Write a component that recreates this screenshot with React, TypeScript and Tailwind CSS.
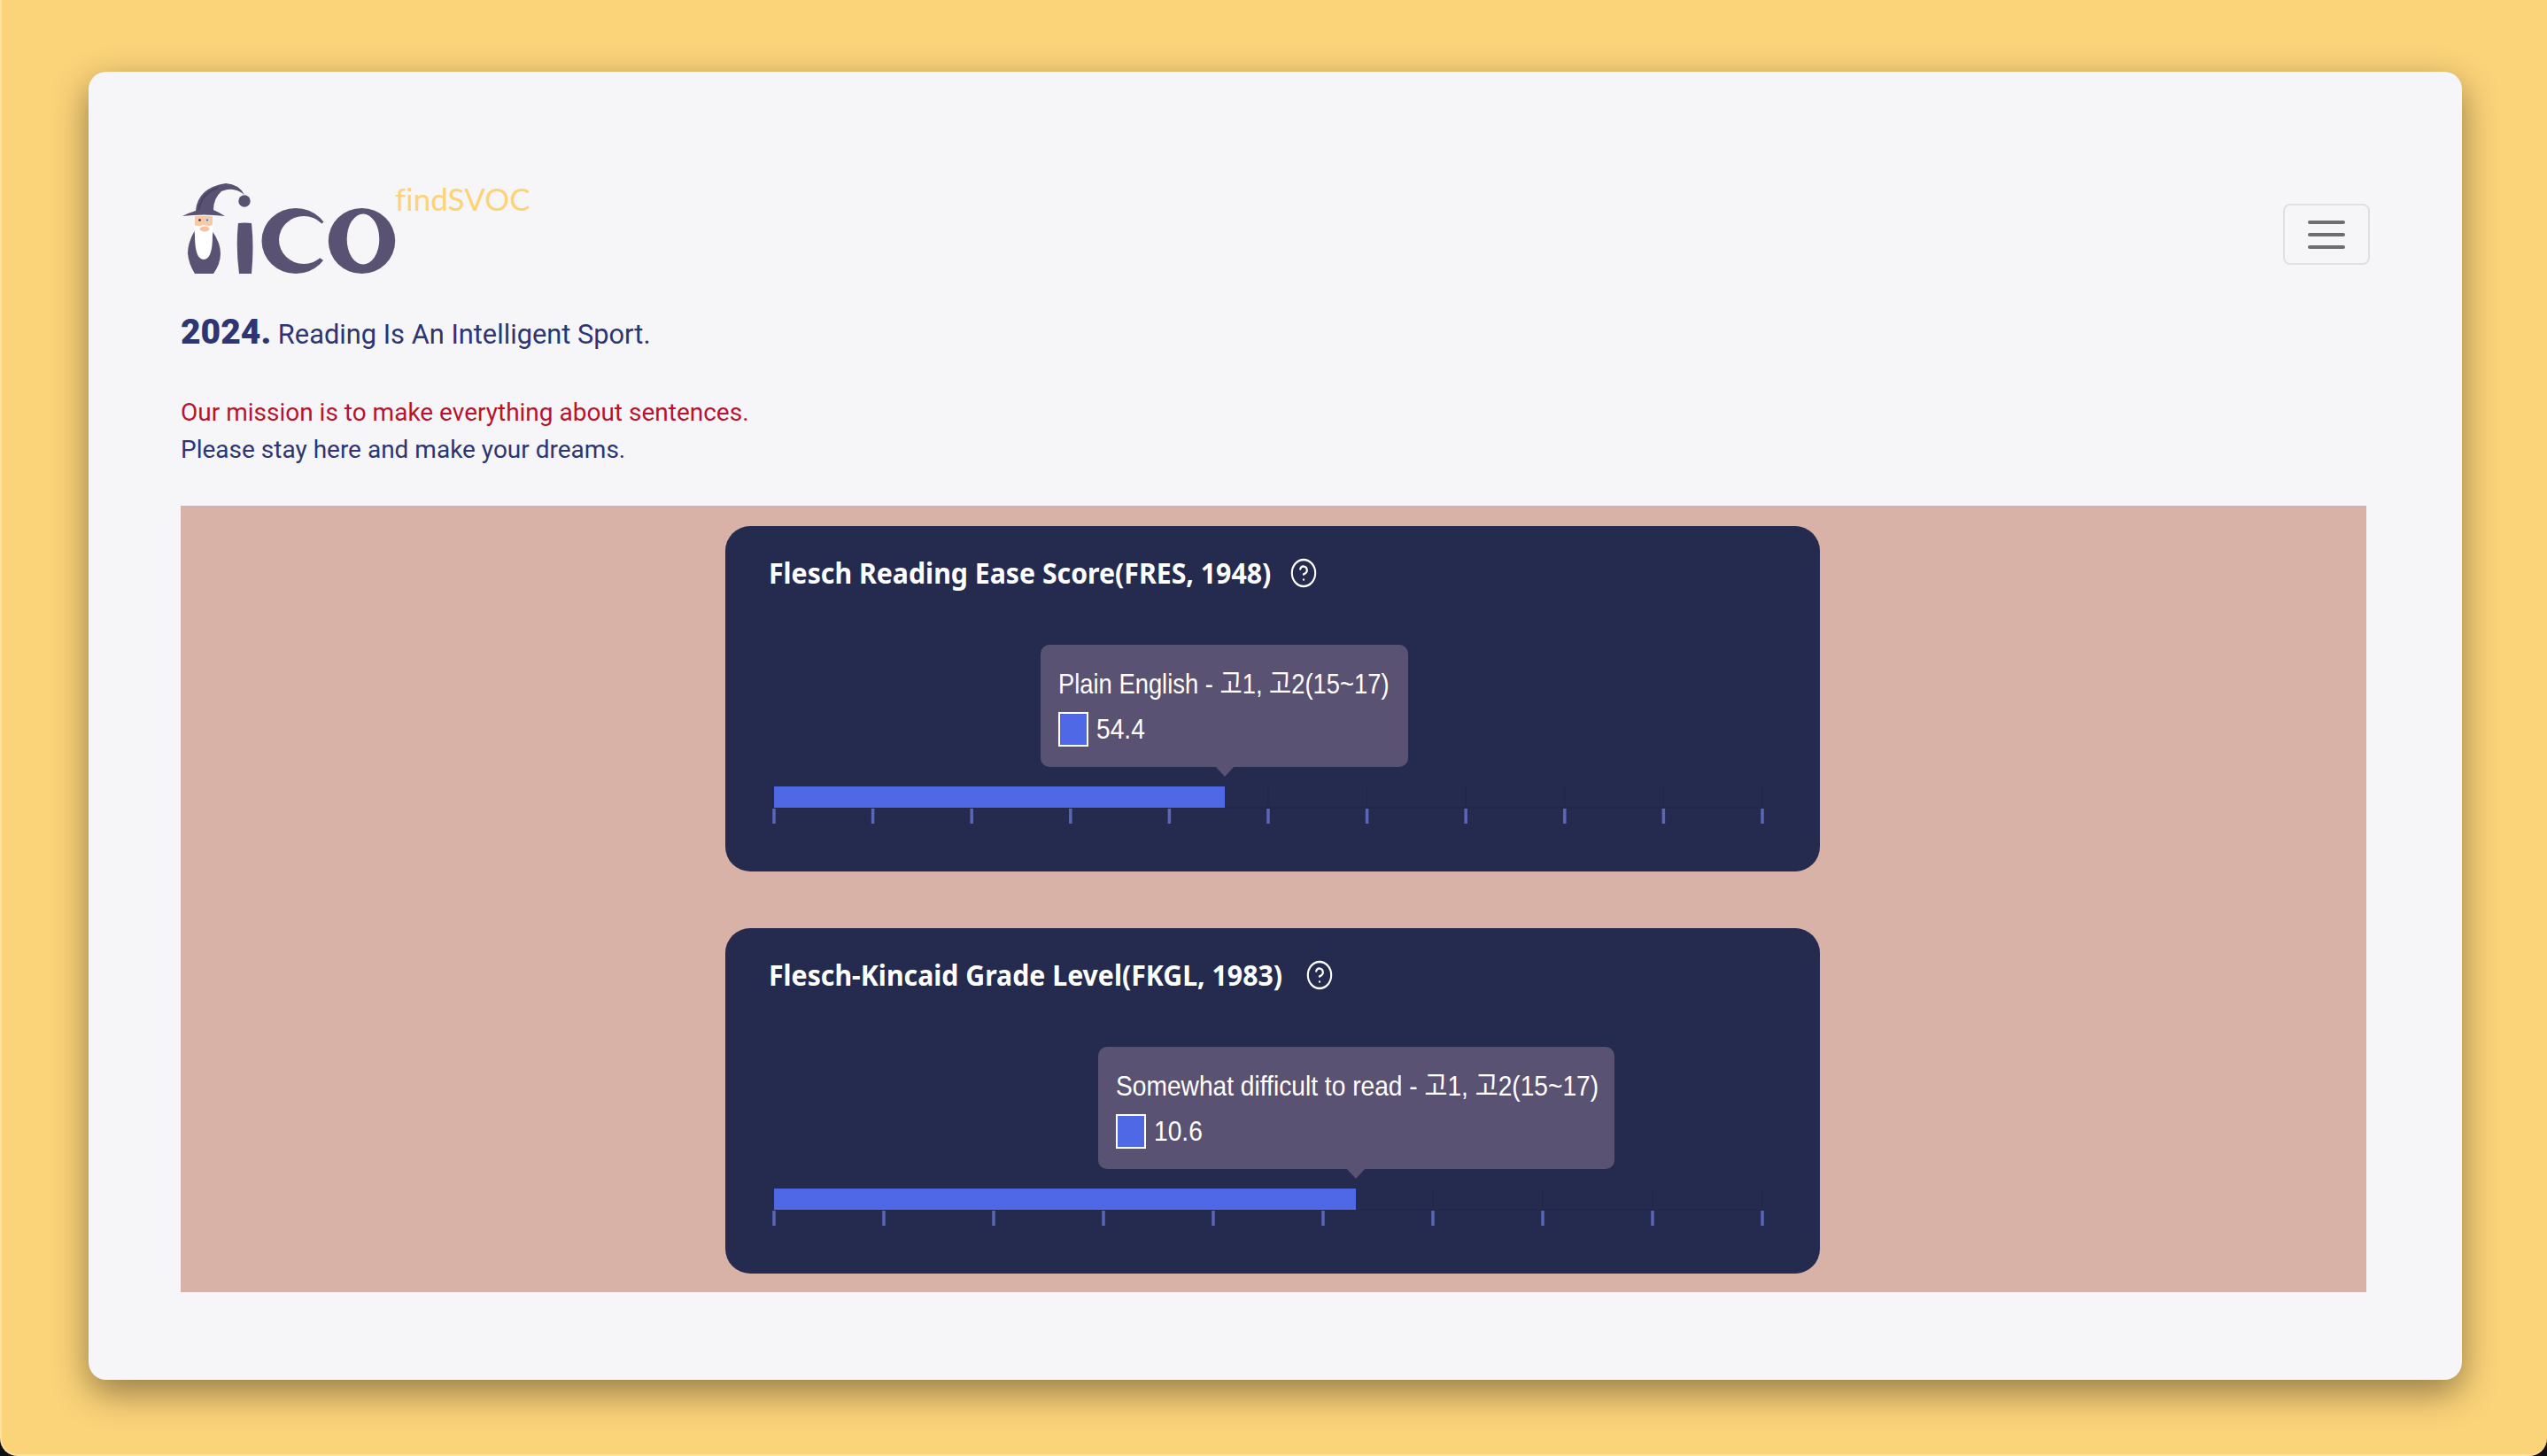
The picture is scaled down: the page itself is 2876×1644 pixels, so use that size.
import { HelpCircle } from "lucide-react";

interface ReadabilityCardProps {
  title: string;
  titleWidth: number;
  label: string;
  labelClass: string;
  value: string;
  ticks: number;
  barEnd: number;
  tooltipLeft: number;
  tooltipWidth: number;
}

const PLOT_LEFT = 55;
const PLOT_RIGHT = 1171;

function Logo() {
  return (
    <svg width="243" height="106" viewBox="0 0 243 106" className="block">
      {/* wizard hat */}
      <path d="M2 40 Q10 36 17 34 Q19 8 51 3 Q66 4 72 16 Q60 6 46 12 Q37 20 37 33 Q44 36 50 40 Q26 37 2 40 Z" fill="#5a5272" />
      <path d="M20 33 Q24 14 42 8" stroke="#4a4266" strokeWidth="2" fill="none" />
      <circle cx="72" cy="23" r="6.7" fill="#5a5272" />
      {/* body */}
      <path d="M16 56 Q8 70 8 82 Q9 94 16 105 L37 105 Q45 94 45 82 Q45 70 35 56 Z" fill="#5a5272" />
      {/* face and beard */}
      <rect x="16" y="40" width="20" height="20" fill="#f8c9a8" />
      <path d="M15 50 Q21 52 26 50 Q31 52 37 50 L36 62 Q36 89 26 89 Q16 89 16 62 Z" fill="#fff" />
      <ellipse cx="27" cy="54.5" rx="5.5" ry="3" fill="#f8c0a0" />
      <circle cx="21.5" cy="44.5" r="1.3" fill="#222" />
      <circle cx="30" cy="44.5" r="2.8" fill="#d8d4c8" />
      <circle cx="30" cy="44.5" r="1" fill="#555" />
      {/* i */}
      <path d="M65 48 Q72.5 47 80 48 Q83 75 80 105 L66 105 Q62 75 65 48 Z" fill="#5a5272" />
      {/* c */}
      <ellipse cx="130" cy="68" rx="38.5" ry="37" fill="#5a5272" />
      <ellipse cx="139" cy="67" rx="28" ry="27" fill="#f6f6f9" />
      <polygon points="151,57 164,44 172,44 172,92 164,92 151,83" fill="#f6f6f9" />
      {/* o */}
      <ellipse cx="204.5" cy="68" rx="37.7" ry="37" fill="#5a5272" />
      <ellipse cx="206" cy="66" rx="18.3" ry="28.5" fill="#f6f6f9" />
    </svg>
  );
}

function ReadabilityCard({ title, titleWidth, label, labelClass, value, ticks, barEnd, tooltipLeft, tooltipWidth }: ReadabilityCardProps) {
  const step = (PLOT_RIGHT - PLOT_LEFT) / (ticks - 1);
  const tickXs = Array.from({ length: ticks }, (_, i) => PLOT_LEFT + i * step);

  return (
    <div className="relative h-[390px] w-[1236px] rounded-[28px] bg-[#252b4f] pl-[49px] pt-[32px] text-white">
      <div className="flex items-center">
        <div style={{ width: titleWidth }}>
          <h3 className="origin-left scale-x-[0.945] whitespace-nowrap font-['Noto_Sans',sans-serif] text-[32px] font-bold leading-[42px]">
            {title}
          </h3>
        </div>
        <HelpCircle size={36} strokeWidth={1.6} className="ml-[21px] scale-x-[0.88]" />
      </div>

      {/* tooltip */}
      <div
        className="absolute top-[134px] h-[138px] rounded-[10px] bg-[#5a5272] pl-[20px] pt-[24px] font-['Liberation_Sans','Noto_Sans_CJK_KR',sans-serif]"
        style={{ left: tooltipLeft, width: tooltipWidth }}
      >
        <div className={`origin-left whitespace-nowrap text-[32px] leading-[40px] ${labelClass}`}>{label}</div>
        <div className="mt-[12px] flex items-center">
          <span className="h-[39px] w-[34px] border-2 border-white bg-[#4f68e6]" />
          <span className="ml-[9px] origin-left scale-x-[0.88] text-[32px] leading-[39px]">{value}</span>
        </div>
        <span
          className="absolute top-full size-0 -translate-x-1/2 border-x-[10px] border-t-[11px] border-x-transparent border-t-[#5a5272]"
          style={{ left: barEnd - tooltipLeft }}
        />
      </div>

      {/* chart */}
      <svg width="1236" height="60" viewBox="0 0 1236 60" className="absolute left-0 top-[292px]">
        {tickXs.map((x) => (
          <line key={`grid-${x}`} x1={x} x2={x} y1="2" y2="26" stroke="#212747" strokeWidth="1" />
        ))}
        <line x1={PLOT_LEFT} x2={PLOT_RIGHT} y1="26" y2="26" stroke="#212747" strokeWidth="1" />
        <rect x={PLOT_LEFT} y="2" width={barEnd - PLOT_LEFT} height="24" fill="#4f68e6" />
        {tickXs.map((x) => (
          <line key={`tick-${x}`} x1={x} x2={x} y1="27" y2="44" stroke="#5a66b8" strokeWidth="3.5" />
        ))}
      </svg>
    </div>
  );
}

export default function App() {
  return (
    <div className="h-[1644px] w-[2876px] overflow-hidden bg-[#111] font-['Roboto',sans-serif]">
      <div className="h-full w-full rounded-b-[20px] border-b-2 border-l-2 border-[#fde2a0] bg-[#fbd379] pl-[98px] pr-[96px] pt-[81px]">
        <div className="h-[1477px] rounded-[20px] bg-[#f6f6f9] pl-[104px] pr-[108px] pt-[123px] shadow-[0_14px_40px_rgba(0,0,0,0.42)]">
          <header className="flex items-start justify-between">
            <div className="flex items-start">
              <Logo />
              <span className="-mt-[4px] -ml-[1px] font-['Lato',sans-serif] text-[35px] font-normal leading-[48px] text-[#fdd377] [font-variant-ligatures:none]">findSVOC</span>
            </div>
            <button className="-mr-[4px] mt-[26px] flex h-[69px] w-[98px] flex-col items-center justify-center gap-[10px] rounded-[8px] border-2 border-[#e0e0e2]">
              <span className="h-[4px] w-[42px] rounded-full bg-[#6e6e72]" />
              <span className="h-[4px] w-[42px] rounded-full bg-[#6e6e72]" />
              <span className="h-[4px] w-[42px] rounded-full bg-[#6e6e72]" />
            </button>
          </header>

          <p className="mt-[41px] text-[30.8px] leading-[48px] text-[#2d3573]">
            <strong className="text-[39px] font-black">2024.</strong> Reading Is An Intelligent Sport.
          </p>

          <div className="mt-[43px] text-[28px] leading-[42px] text-[#2d3573]">
            <p className="text-[#b8142e]">Our mission is to make everything about sentences.</p>
            <p>Please stay here and make your dreams.</p>
          </div>

          <section className="mt-[42px] flex h-[888px] flex-col items-center gap-[64px] bg-[#d8b2a6] pr-[2px] pt-[23px]">
            <ReadabilityCard
              title="Flesch Reading Ease Score(FRES, 1948)"
              titleWidth={565}
              label="Plain English - 고1, 고2(15~17)"
              labelClass="scale-x-[0.855]"
              value="54.4"
              ticks={11}
              barEnd={564}
              tooltipLeft={356}
              tooltipWidth={415}
            />
            <ReadabilityCard
              title="Flesch-Kincaid Grade Level(FKGL, 1983)"
              titleWidth={583}
              label="Somewhat difficult to read - 고1, 고2(15~17)"
              labelClass="scale-x-[0.88]"
              value="10.6"
              ticks={10}
              barEnd={712}
              tooltipLeft={421}
              tooltipWidth={583}
            />
          </section>
        </div>
      </div>
    </div>
  );
}
